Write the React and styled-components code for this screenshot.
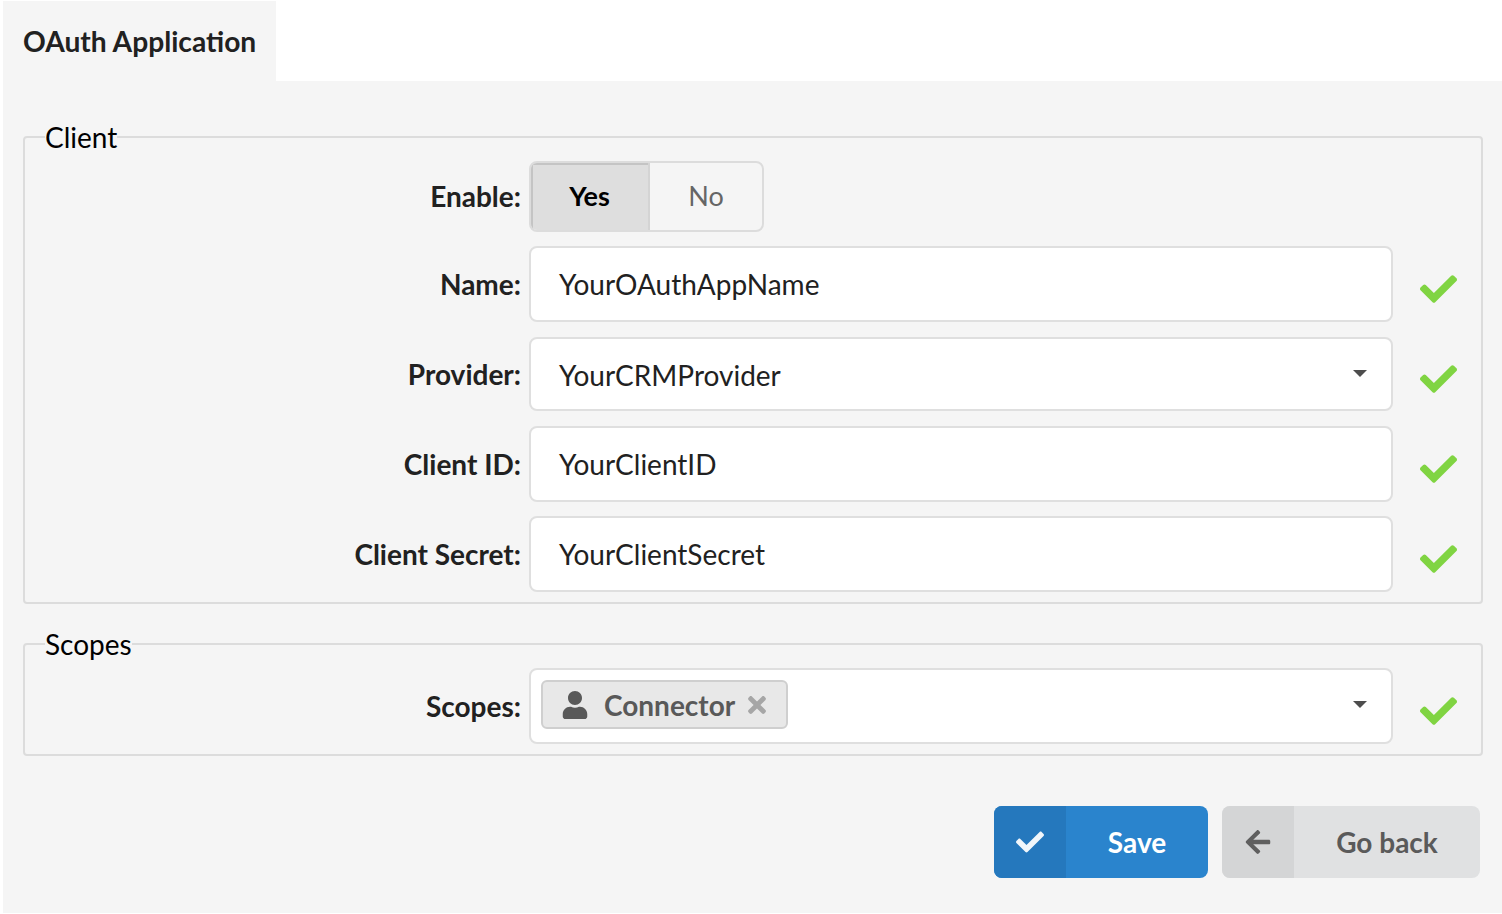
import React from "react";
import styled, { createGlobalStyle } from "styled-components";
import { FaCheck, FaArrowLeft, FaUser, FaTimes } from "react-icons/fa";

const GlobalStyle = createGlobalStyle`
  html, body {
    margin: 0;
    background: #fff;
    font-family: Lato, "Helvetica Neue", Arial, sans-serif;
    font-size: 28px;
    color: #212121;
  }
  * { box-sizing: border-box; }
`;

const Page = styled.div`
  width: 1502px;
  height: 914px;
  padding: 1px 0 1px 3px;
  overflow: hidden;
  display: flex;
  flex-direction: column;
`;

const Tab = styled.div`
  width: 273px;
  height: 80px;
  flex: none;
  padding-left: 20px;
  display: flex;
  align-items: center;
  background: #f5f5f5;
  font-size: 28.2px;
  font-weight: 700;
`;

const Panel = styled.div`
  flex: 1;
  padding: 39px 19px 0 20px;
  background: #f5f5f5;
`;

const Fieldset = styled.fieldset`
  margin: 0 0 ${(p) => p.$gap}px;
  padding: 7px 24px 10px 0;
  min-width: 0;
  border: 2px solid #dcdcdc;
  border-radius: 4px;
`;

const Legend = styled.legend`
  margin-left: 20px;
  padding: 1px 0;
  font-size: 28px;
  line-height: 32px;
  color: #000;
`;

const Row = styled.div`
  display: grid;
  grid-template-columns: 504px 864px 64px;
  align-items: center;
  margin-top: ${(p) => p.$top || 0}px;
`;

const Label = styled.label`
  padding-right: 8px;
  margin-bottom: ${(p) => p.$lift || 0}px;
  text-align: right;
  font-weight: 700;
`;

const Toggle = styled.div`
  display: flex;
  width: 235px;
  height: 71px;
  border: 2px solid #dcdcdc;
  border-radius: 8px;
  overflow: hidden;
  font-size: 27px;
`;

const ToggleOption = styled.div`
  display: flex;
  align-items: center;
  justify-content: center;
  padding-bottom: 2px;
  width: ${(p) => (p.$active ? "119px" : "auto")};
  flex: ${(p) => (p.$active ? "none" : 1)};
  font-weight: ${(p) => (p.$active ? 700 : 400)};
  color: ${(p) => (p.$active ? "#000" : "#666")};
  background: ${(p) => (p.$active ? "#dedede" : "transparent")};
  border-right: ${(p) => (p.$active ? "2px solid #d4d4d4" : "none")};
  box-shadow: ${(p) => (p.$active ? "inset 2px 2px 0 #c4c4c4" : "none")};
`;

const Field = styled.div`
  position: relative;
  display: flex;
  align-items: center;
  height: ${(p) => (p.$select ? 74 : 76)}px;
  padding-left: ${(p) => p.$inset ?? 28}px;
  padding-top: ${(p) => (p.$select ? 2 : 0)}px;
  background: #fff;
  border: 2px solid #dfdfdf;
  border-radius: 8px;
  color: #212121;
`;

const Caret = styled.span`
  position: absolute;
  right: 24px;
  top: 31px;
  width: 0;
  height: 0;
  border-style: solid;
  border-width: 7px 7px 0;
  border-color: #4d4d4d transparent transparent;
`;

const Tick = styled.div`
  display: flex;
  justify-content: flex-start;
  padding: 10px 0 0 27px;
  color: #80d442;
  font-size: 38px;
  line-height: 0;
`;

const Chip = styled.div`
  display: flex;
  align-items: center;
  width: 247px;
  height: 49px;
  margin-bottom: 3px;
  padding-left: 18px;
  background: #e8e8e8;
  border: 2px solid #cfcfcf;
  border-radius: 6px;
  color: #595959;
  font-weight: 700;
`;

const ChipName = styled.span`
  margin-left: 15px;
`;

const ChipRemove = styled.span`
  display: flex;
  margin-left: 9px;
  color: #a6a6a6;
  font-size: 26px;
`;

const Actions = styled.div`
  display: flex;
  justify-content: flex-end;
  gap: 14px;
  padding-right: 3px;
`;

const Button = styled.button`
  display: flex;
  align-items: stretch;
  width: ${(p) => p.$width}px;
  height: 72px;
  padding: 0;
  border: none;
  border-radius: 8px;
  overflow: hidden;
  background: ${(p) => (p.$primary ? "#2a84cd" : "#e0e1e2")};
  color: ${(p) => (p.$primary ? "#fff" : "#5a5a5a")};
  font: 700 28px Lato, sans-serif;
`;

const ButtonIcon = styled.span`
  display: flex;
  align-items: center;
  justify-content: center;
  width: 72px;
  flex: none;
  font-size: 28px;
  background: ${(p) => (p.$primary ? "#2578bd" : "#d4d5d6")};
  color: ${(p) => (p.$primary ? "#f0f6fb" : "#5f5f5f")};
`;

const ButtonText = styled.span`
  flex: 1;
  display: flex;
  align-items: center;
  justify-content: center;
`;

const Valid = () => (
  <Tick>
    <FaCheck />
  </Tick>
);

export default function App() {
  return (
    <>
      <GlobalStyle />
      <Page>
        <Tab>OAuth Application</Tab>
        <Panel>
          <Fieldset $gap={23}>
            <Legend>Client</Legend>
            <Row>
              <Label $lift={2}>Enable:</Label>
              <Toggle>
                <ToggleOption $active>Yes</ToggleOption>
                <ToggleOption>No</ToggleOption>
              </Toggle>
            </Row>
            <Row $top={14}>
              <Label>Name:</Label>
              <Field>YourOAuthAppName</Field>
              <Valid />
            </Row>
            <Row $top={15}>
              <Label>Provider:</Label>
              <Field $select>
                YourCRMProvider
                <Caret />
              </Field>
              <Valid />
            </Row>
            <Row $top={15}>
              <Label>Client ID:</Label>
              <Field>YourClientID</Field>
              <Valid />
            </Row>
            <Row $top={14}>
              <Label>Client Secret:</Label>
              <Field>YourClientSecret</Field>
              <Valid />
            </Row>
          </Fieldset>
          <Fieldset $gap={50}>
            <Legend>Scopes</Legend>
            <Row>
              <Label>Scopes:</Label>
              <Field $inset={10}>
                <Chip>
                  <FaUser size={28} />
                  <ChipName>Connector</ChipName>
                  <ChipRemove>
                    <FaTimes />
                  </ChipRemove>
                </Chip>
                <Caret />
              </Field>
              <Valid />
            </Row>
          </Fieldset>
          <Actions>
            <Button $primary $width={214}>
              <ButtonIcon $primary>
                <FaCheck />
              </ButtonIcon>
              <ButtonText>Save</ButtonText>
            </Button>
            <Button $width={258}>
              <ButtonIcon>
                <FaArrowLeft />
              </ButtonIcon>
              <ButtonText>Go back</ButtonText>
            </Button>
          </Actions>
        </Panel>
      </Page>
    </>
  );
}
